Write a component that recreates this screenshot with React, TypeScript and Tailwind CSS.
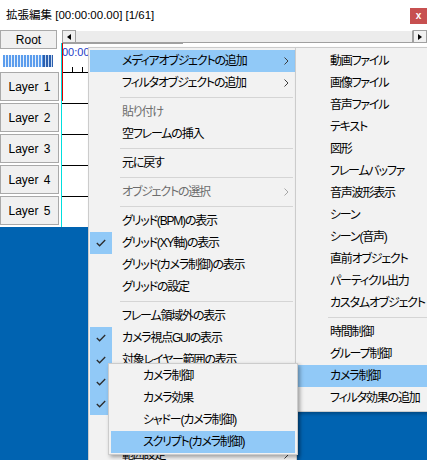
import React from 'react';

type Entry = {
  label?: string;
  sep?: boolean;
  disabled?: boolean;
  checked?: boolean;
  sub?: boolean;
  hl?: boolean;
};

const mainMenu: Entry[] = [
  { label: 'メディアオブジェクトの追加', sub: true, hl: true },
  { label: 'フィルタオブジェクトの追加', sub: true },
  { sep: true },
  { label: '貼り付け', disabled: true },
  { label: '空フレームの挿入' },
  { sep: true },
  { label: '元に戻す' },
  { sep: true },
  { label: 'オブジェクトの選択', disabled: true, sub: true },
  { sep: true },
  { label: 'グリッド(BPM)の表示' },
  { label: 'グリッド(XY軸)の表示', checked: true },
  { label: 'グリッド(カメラ制御)の表示' },
  { label: 'グリッドの設定' },
  { sep: true },
  { label: 'フレーム領域外の表示' },
  { label: 'カメラ視点GUIの表示', checked: true },
  { label: '対象レイヤー範囲の表示', checked: true },
  { label: '時間の表示', checked: true },
  { label: 'レイヤー幅の表示', checked: true },
  { label: 'レイヤーの設定' },
  { sep: true },
  { label: '範囲設定', sub: true },
];

const mediaMenu: Entry[] = [
  { label: '動画ファイル' },
  { label: '画像ファイル' },
  { label: '音声ファイル' },
  { label: 'テキスト' },
  { label: '図形' },
  { label: 'フレームバッファ' },
  { label: '音声波形表示' },
  { label: 'シーン' },
  { label: 'シーン(音声)' },
  { label: '直前オブジェクト' },
  { label: 'パーティクル出力' },
  { label: 'カスタムオブジェクト' },
  { sep: true },
  { label: '時間制御' },
  { label: 'グループ制御' },
  { label: 'カメラ制御', hl: true },
  { label: 'フィルタ効果の追加' },
];

const cameraMenu: Entry[] = [
  { label: 'カメラ制御' },
  { label: 'カメラ効果' },
  { label: 'シャドー(カメラ制御)' },
  { label: 'スクリプト(カメラ制御)', hl: true },
];

function Check() {
  return (
    <svg width="10" height="8" viewBox="0 0 10 8">
      <polyline points="0.8,4 3.6,6.8 9.2,1" fill="none" stroke="#2b2b2b" strokeWidth="1.3" />
    </svg>
  );
}

function Chevron({ dim }: { dim?: boolean }) {
  return (
    <svg width="5" height="8" viewBox="0 0 5 8">
      <polyline points="0.5,0.5 4,4 0.5,7.5" fill="none" stroke={dim ? '#a6a6a6' : '#3c3c3c'} strokeWidth="1" />
    </svg>
  );
}

function MenuRows({ entries }: { entries: Entry[] }) {
  return (
    <>
      {entries.map((e, i) =>
        e.sep ? (
          <div key={i} className="flex h-[7px] items-center pl-[30px] pr-[2px]">
            <div className="h-px w-full bg-[#d5d5d5]" />
          </div>
        ) : (
          <div
            key={i}
            className={`flex h-[22px] items-center pr-[6px] ${e.hl ? 'bg-[#91c9f7]' : ''} ${
              e.disabled ? 'text-[#6d6d6d]' : 'text-black'
            }`}
          >
            <div className={`flex h-[22px] w-[22px] shrink-0 items-center justify-center ${e.checked ? 'bg-[#91c9f7]' : ''}`}>
              {e.checked && <Check />}
            </div>
            <span className="flex-1 whitespace-nowrap pl-[10px] leading-[22px] tracking-[-1.2px]">{e.label}</span>
            {e.sub && <Chevron dim={e.disabled} />}
          </div>
        )
      )}
    </>
  );
}

const layers = ['Layer 1', 'Layer 2', 'Layer 3', 'Layer 4', 'Layer 5'];

export default function App() {
  return (
    <div className="relative h-[460px] w-[427px] overflow-hidden bg-[#0063b1] font-['Liberation_Sans','Noto_Sans_CJK_JP',sans-serif] [font-feature-settings:'palt']">
      {/* window */}
      <div className="flex h-[227px] flex-col overflow-hidden bg-white">
        <div className="flex h-[30px] shrink-0 items-start justify-between pl-[6px]">
          <span className="mt-[7px] text-[11.5px] leading-[16px] text-black">拡張編集 [00:00:00.00] [1/61]</span>
          <div className="mt-[8px] flex h-[16px] w-[17px] items-center justify-center bg-[#c75050] text-[10px] font-bold leading-none text-white">
            x
          </div>
        </div>

        <div className="flex flex-1">
          {/* layer header column */}
          <div className="flex w-[61px] shrink-0 flex-col text-[12px] text-black">
            <div className="flex h-[19px] w-[57px] items-center justify-center border border-[#a9a9a9] bg-[#f0f0f0]">Root</div>
            <div className="ml-[3px] mt-[6px] flex h-[12px] w-[50px]">
              <div className="w-[40px] bg-[repeating-linear-gradient(90deg,#5c9ded_0px,#5c9ded_2px,#e6f0fb_2px,#e6f0fb_3px)]" />
              <div className="w-[10px] bg-[repeating-linear-gradient(90deg,#2b5fae_0px,#2b5fae_2px,#c9dbf2_2px,#c9dbf2_3px)]" />
            </div>
            <div className="mt-[5px] flex flex-col gap-[2px]">
              {layers.map((l) => (
                <div
                  key={l}
                  className="flex h-[29px] w-[59px] items-center justify-center border border-[#a9a9a9] bg-[#f0f0f0] [word-spacing:2px]"
                >
                  {l}
                </div>
              ))}
            </div>
          </div>

          {/* timeline */}
          <div className="relative flex flex-1 flex-col">
            <div className="flex h-[13px] pl-[1px]">
              <div className="flex w-[14px] items-center justify-center border border-[#a0a0a0] bg-[#f0f0f0]">
                <div className="h-0 w-0 border-y-[3px] border-r-[4px] border-y-transparent border-r-black" />
              </div>
              <div className="flex-1 border-y border-r border-t-white border-b-[#a0a0a0] border-r-[#a0a0a0] bg-[#ececec]" />
              <div className="flex w-[14px] items-center justify-center border border-[#a0a0a0] bg-[#f0f0f0]">
                <div className="h-0 w-0 border-y-[3px] border-l-[4px] border-y-transparent border-l-black" />
              </div>
            </div>
            <div className="flex flex-1 flex-col border-l border-[#00dede]">
              <div className="relative h-[30px] border-b border-black">
                <div className="h-px w-[121px] bg-[#a0a0a0]" />
                <span className="mt-[3px] block text-[11px] leading-[11px] text-[#1e3cc8]">00:00:00.00</span>
                <div className="absolute bottom-0 left-[10px] h-[5px] w-px bg-black" />
                <div className="absolute bottom-0 left-[20px] h-[5px] w-px bg-black" />
              </div>
              {layers.map((l, i) => (
                <div key={l} className={`h-[31px] shrink-0 ${i < 4 ? 'border-b border-black' : ''}`} />
              ))}
            </div>
            {/* current frame cursor */}
            <div className="absolute left-[1px] top-[13px] h-[58px] w-px bg-[#e00000]" />
          </div>
        </div>
      </div>

      {/* context menu */}
      <div className="absolute left-[88px] top-[47px] z-10 w-[209px] border border-[#cccccc] bg-[#f2f2f2] px-[1px] py-[2px] text-[12px] shadow-[2px_2px_3px_rgba(0,0,0,0.25)]">
        <MenuRows entries={mainMenu} />
      </div>

      {/* media object submenu */}
      <div className="absolute left-[295px] top-[47px] z-20 w-[170px] border border-[#cccccc] bg-[#f2f2f2] px-[2px] py-[2px] text-[12px] shadow-[2px_2px_3px_rgba(0,0,0,0.25)]">
        <MenuRows entries={mediaMenu} />
      </div>

      {/* camera submenu */}
      <div className="absolute left-[108px] top-[363px] z-30 w-[190px] border border-[#cccccc] bg-[#f2f2f2] px-[2px] py-[1px] text-[12px] shadow-[2px_2px_4px_rgba(0,0,0,0.35)]">
        <MenuRows entries={cameraMenu} />
      </div>
    </div>
  );
}
